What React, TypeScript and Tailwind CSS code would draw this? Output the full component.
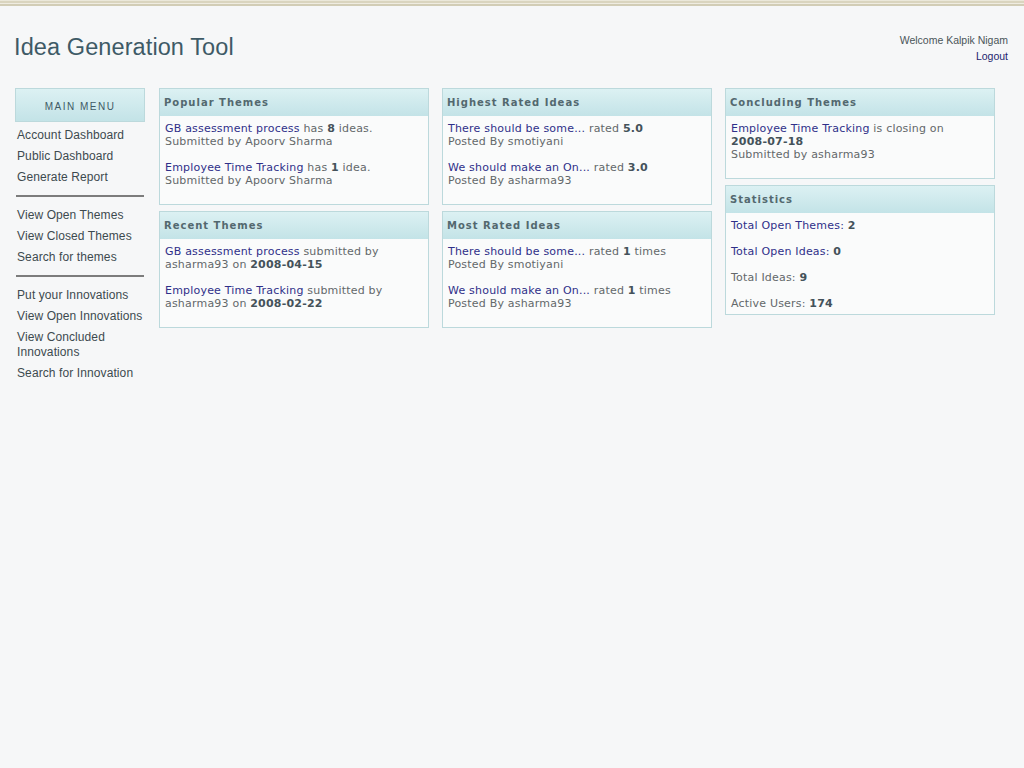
import React from "react";

const menuGroups: string[][] = [
  ["Account Dashboard", "Public Dashboard", "Generate Report"],
  ["View Open Themes", "View Closed Themes", "Search for themes"],
  ["Put your Innovations", "View Open Innovations", "View Concluded Innovations", "Search for Innovation"],
];

const headBg =
  "bg-[linear-gradient(to_bottom,#dcf1f3,#c3e3e7)]";

function Panel({ title, children, tail = true }: { title: string; children: React.ReactNode; tail?: boolean }) {
  return (
    <div className="border border-[#bcd9dc] bg-[#fafbfb]">
      <div className={`flex h-[27px] items-center px-[4px] ${headBg}`}>
        <span className="font-['DejaVu_Sans',sans-serif] text-[10px] font-bold tracking-[1px] text-[#53686f]">
          {title}
        </span>
      </div>
      <div
        className={`flex flex-col gap-[13px] px-[5px] pt-[6px] font-['DejaVu_Sans',sans-serif] text-[11px] leading-[13px] tracking-[0.2px] text-[#63686a] ${
          tail ? "pb-[17px]" : "pb-[4px]"
        }`}
      >
        {children}
      </div>
    </div>
  );
}

const A = ({ children }: { children: React.ReactNode }) => (
  <a href="#" className="text-[#2f3089]">
    {children}
  </a>
);
const B = ({ children }: { children: React.ReactNode }) => (
  <b className="text-[#44525a]">{children}</b>
);

export default function App() {
  return (
    <div className="min-h-[768px] bg-[#f6f7f8]">
      <div className="flex flex-col">
        <div className="h-px bg-[#ebe8da]" />
        <div className="h-[2px] bg-[#dad5bf]" />
        <div className="h-px bg-[#efece1]" />
        <div className="h-[2px] bg-[#d2cdb6]" />
      </div>

      <header className="flex h-[82px] items-start justify-between">
        <h1 className="pl-[14px] pt-[27px] font-['Liberation_Sans',sans-serif] text-[23.5px] leading-[28px] tracking-[0.1px] text-[#3e5a66]">
          Idea Generation Tool
        </h1>
        <div className="flex flex-col items-end pr-[16px] pt-[26px] font-['Liberation_Sans',sans-serif] text-[10.5px] leading-[16px]">
          <span className="text-[#4a5558]">Welcome Kalpik Nigam</span>
          <a href="#" className="text-[#1d1f6e]">
            Logout
          </a>
        </div>
      </header>

      <main className="flex items-start gap-[14px] pl-[15px]">
        <nav className="w-[130px]">
          <div className={`flex h-[34px] items-center justify-center border border-[#bcd9dc] pt-[2px] ${headBg}`}>
            <span className="font-['Liberation_Sans',sans-serif] text-[10px] tracking-[1.5px] text-[#3e5a66]">
              MAIN MENU
            </span>
          </div>
          <div className="mt-[3px] font-['Liberation_Sans',sans-serif] text-[12px] leading-[15px] tracking-[0.1px] text-[#3d4a4f]">
            {menuGroups.map((group, gi) => (
              <div key={gi}>
                {gi > 0 && <div className="mx-[1px] mb-[8px] mt-[7px] h-[2px] bg-[#7c7c7c]" />}
                {group.map((item) => (
                  <a key={item} href="#" className="block py-[3px] pl-[2px]">
                    {item}
                  </a>
                ))}
              </div>
            ))}
          </div>
        </nav>

        <div className="flex w-[270px] flex-col gap-[6px]">
          <Panel title="Popular Themes">
            <div>
              <A>GB assessment process</A> has <B>8</B> ideas.
              <br />
              Submitted by Apoorv Sharma
            </div>
            <div>
              <A>Employee Time Tracking</A> has <B>1</B> idea.
              <br />
              Submitted by Apoorv Sharma
            </div>
          </Panel>
          <Panel title="Recent Themes">
            <div>
              <A>GB assessment process</A> submitted by
              <br />
              asharma93 on <B>2008-04-15</B>
            </div>
            <div>
              <A>Employee Time Tracking</A> submitted by
              <br />
              asharma93 on <B>2008-02-22</B>
            </div>
          </Panel>
        </div>

        <div className="ml-[-1px] flex w-[270px] flex-col gap-[6px]">
          <Panel title="Highest Rated Ideas">
            <div>
              <A>There should be some...</A> rated <B>5.0</B>
              <br />
              Posted By smotiyani
            </div>
            <div>
              <A>We should make an On...</A> rated <B>3.0</B>
              <br />
              Posted By asharma93
            </div>
          </Panel>
          <Panel title="Most Rated Ideas">
            <div>
              <A>There should be some...</A> rated <B>1</B> times
              <br />
              Posted By smotiyani
            </div>
            <div>
              <A>We should make an On...</A> rated <B>1</B> times
              <br />
              Posted By asharma93
            </div>
          </Panel>
        </div>

        <div className="ml-[-1px] flex w-[270px] flex-col gap-[6px]">
          <Panel title="Concluding Themes">
            <div>
              <A>Employee Time Tracking</A> is closing on
              <br />
              <B>2008-07-18</B>
              <br />
              Submitted by asharma93
            </div>
          </Panel>
          <Panel title="Statistics" tail={false}>
            <div>
              <A>Total Open Themes:</A> <B>2</B>
            </div>
            <div>
              <A>Total Open Ideas:</A> <B>0</B>
            </div>
            <div>
              Total Ideas: <B>9</B>
            </div>
            <div>
              Active Users: <B>174</B>
            </div>
          </Panel>
        </div>
      </main>
    </div>
  );
}
